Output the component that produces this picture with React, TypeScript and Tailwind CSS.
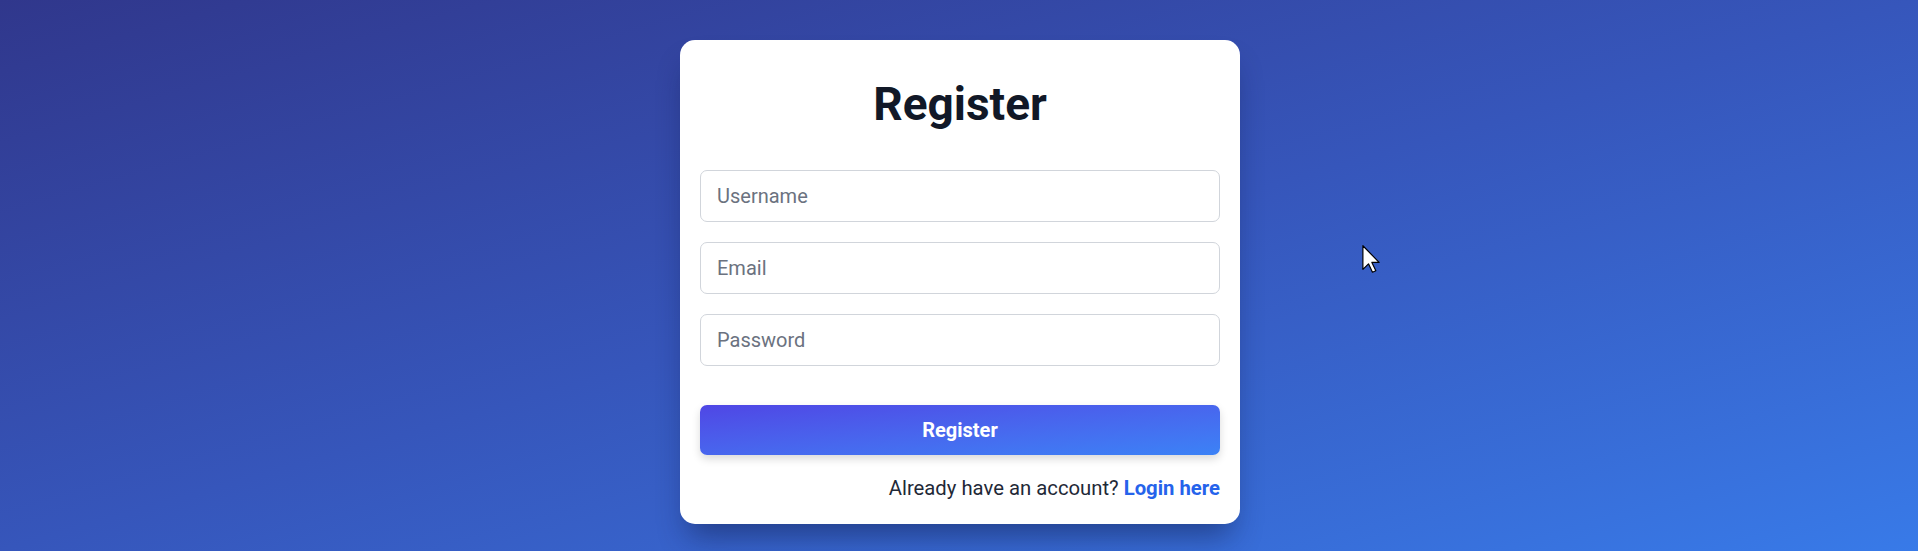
import React from "react";

export default function App() {
  return (
    <div
      className="relative h-[551px] overflow-hidden w-full bg-linear-to-br from-[#30378c] via-[#3656bb] to-[#387ae8] pt-[40px] pl-[2px] flex justify-center items-start"
      style={{ fontFamily: "Roboto, 'Liberation Sans', sans-serif" }}
    >
      <div className="w-[560px] bg-white rounded-[15px] shadow-[0_20px_30px_-8px_rgba(10,20,60,0.45)] px-[20px] pt-[39px] pb-[21px] flex flex-col">
        <h1 className="text-center text-[46px] leading-[50px] font-bold text-[#111827]">
          Register
        </h1>
        <div className="mt-[41px] flex flex-col gap-[20px]">
          {["Username", "Email", "Password"].map((p) => (
            <input
              key={p}
              type={p === "Password" ? "password" : "text"}
              placeholder={p}
              className="h-[52px] w-full rounded-[7px] border border-[#d1d5db] px-[16px] text-[20px] text-[#111827] placeholder:text-[#6b7280] outline-none"
            />
          ))}
        </div>
        <button className="mt-[39px] h-[50px] w-full rounded-[7px] bg-linear-to-br from-[#4f46e5] to-[#3b82f6] text-white text-[20px] font-bold shadow-[0_4px_8px_rgba(0,0,0,0.15)]">
          Register
        </button>
        <p className="mt-[18px] text-right text-[20.3px] leading-[30px] text-[#1f2937]">
          Already have an account?{" "}
          <a className="font-bold text-[#2563eb]">Login here</a>
        </p>
      </div>
      <svg
        className="absolute left-[1362px] top-[245px]"
        width="18"
        height="28"
        viewBox="0 0 12 19"
      >
        <path
          d="M0.5 0.5 L0.5 16.5 L4.3 12.8 L7 18.5 L9.3 17.5 L6.6 11.8 L11.5 11.8 Z"
          fill="white"
          stroke="black"
          strokeWidth="0.8"
          strokeLinejoin="round"
        />
      </svg>
    </div>
  );
}
